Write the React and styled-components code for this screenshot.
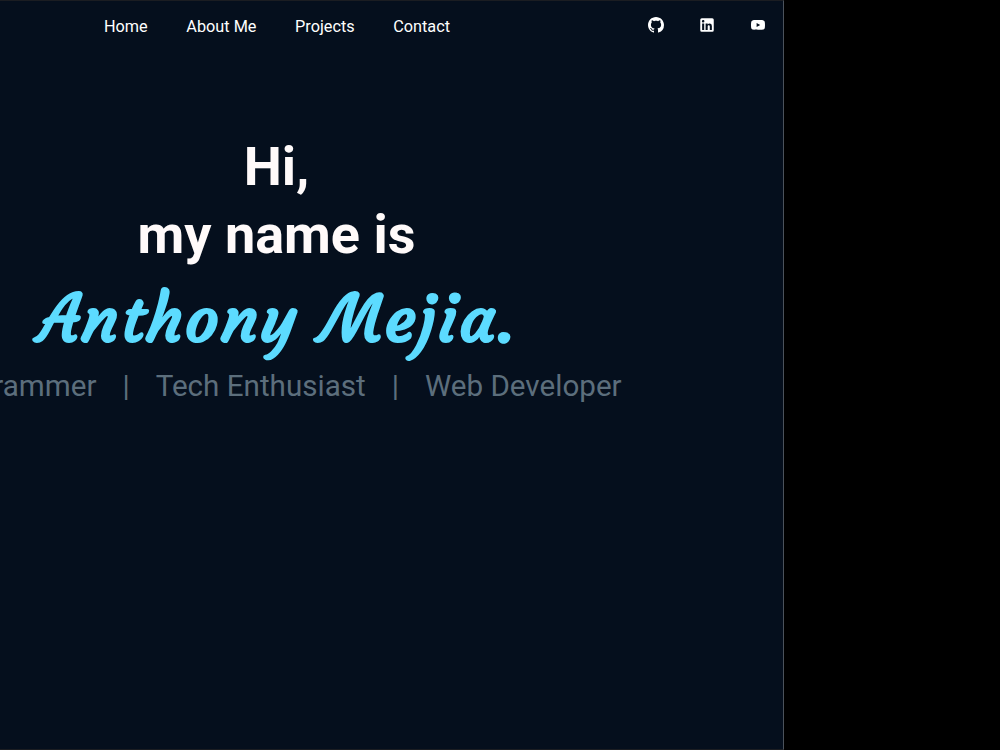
import { AiFillYoutube } from 'react-icons/ai';
import { BsGithub } from 'react-icons/bs';
import styled, { createGlobalStyle } from 'styled-components';

const GlobalStyle = createGlobalStyle`
  * {
    box-sizing: border-box;
  }

  body {
    margin: 0;
    background: #000;
    font-family: Roboto, sans-serif;
    overflow: hidden;
  }
`;

const Page = styled.div`
  width: 784px;
  height: 750px;
  background: #050f1d;
  border-top: 1px solid #1b1d22;
  border-right: 1px solid #4b525b;
  border-bottom: 1px solid #1b1d22;
  overflow: hidden;
`;

const NavBar = styled.nav`
  display: flex;
  justify-content: space-between;
  padding: 16px 17px 0 104px;
  height: 124px;
`;

const Links = styled.div`
  display: flex;
  gap: 38.6px;
`;

const NavLink = styled.a`
  color: white;
  font-size: 16.25px;
  line-height: 20px;
`;

const Socials = styled.div`
  display: flex;
  gap: 35px;
  color: white;
  font-size: 16px;
`;

const LinkedinIcon = styled.svg`
  width: 18px;
  height: 18px;
  margin: -1px;
  fill: currentColor;
`;

const Hero = styled.main`
  display: flex;
  flex-direction: column;
  align-items: center;
  width: 554px;
  white-space: nowrap;
`;

const Greeting = styled.h1`
  margin: 8px 0 0 -1px;
  color: #fffafa;
  font-size: 54px;
  line-height: 68px;
  text-align: center;
`;

const Name = styled.div`
  margin-left: 2px;
  color: #5cdbff;
  font-family: Courgette, Lato, sans-serif;
  font-size: 66px;
  font-weight: 700;
  letter-spacing: 2.1px;
  line-height: 100px;
`;

const Roles = styled.div`
  display: flex;
  gap: 26px;
  margin-left: -1px;
  color: #5c6e7c;
  font-size: 29.6px;
  line-height: 35px;
`;

const App = () => (
  <>
    <GlobalStyle />
    <Page>
      <NavBar>
        <Links>
          <NavLink>Home</NavLink>
          <NavLink>About Me</NavLink>
          <NavLink>Projects</NavLink>
          <NavLink>Contact</NavLink>
        </Links>
        <Socials>
          <BsGithub />
          <LinkedinIcon viewBox="0 0 24 24">
            <path d="M19 3a2 2 0 0 1 2 2v14a2 2 0 0 1-2 2H5a2 2 0 0 1-2-2V5a2 2 0 0 1 2-2h14m-.5 15.5v-5.3a3.26 3.26 0 0 0-3.26-3.26c-.85 0-1.84.52-2.32 1.3v-1.11h-2.79v8.37h2.79v-4.93c0-.77.62-1.4 1.39-1.4a1.4 1.4 0 0 1 1.4 1.4v4.93h2.79M6.88 8.56a1.68 1.68 0 0 0 1.68-1.68c0-.93-.75-1.69-1.68-1.69a1.69 1.69 0 0 0-1.69 1.69c0 .93.76 1.68 1.69 1.68m1.39 9.94v-8.37H5.5v8.37h2.77z" />
          </LinkedinIcon>
          <AiFillYoutube />
        </Socials>
      </NavBar>
      <Hero>
        <Greeting>
          Hi,
          <br />
          my name is
        </Greeting>
        <Name>Anthony Mejia.</Name>
        <Roles>
          <span>Programmer</span>
          <span>|</span>
          <span>Tech Enthusiast</span>
          <span>|</span>
          <span>Web Developer</span>
        </Roles>
      </Hero>
    </Page>
  </>
);

export default App;
